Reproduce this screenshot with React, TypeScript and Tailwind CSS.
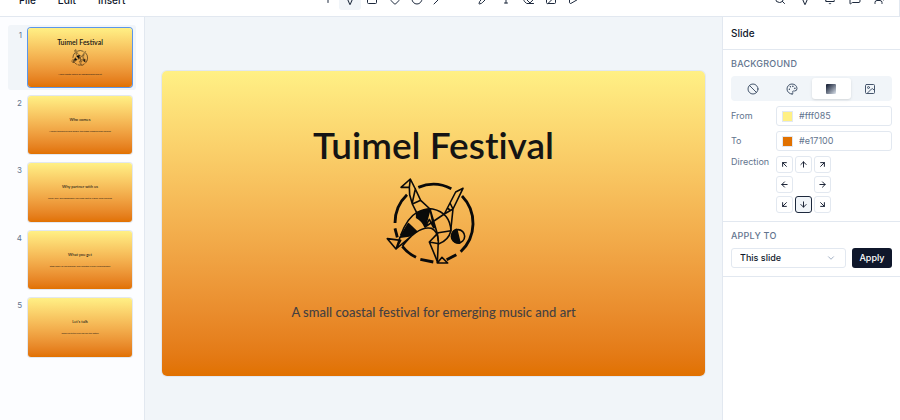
import React, { useState } from 'react';
import {
    ArrowDown, ArrowDownLeft, ArrowDownRight, ArrowLeft, ArrowRight, ArrowUp, ArrowUpLeft, ArrowUpRight,
    Ban, Bell, ChevronDown, Circle, Diamond, Eraser, Image, MessageSquare, Minus, MousePointer2, Palette,
    Pencil, Play, Plus, Search, Slash, Square, Type, UserPlus,
} from 'lucide-react';

const slides = [
    { title: 'Tuimel Festival', text: 'A small coastal festival for emerging music and art', cover: true },
    { title: 'Who comes', text: 'A couple thousand curious people, two stages, camping under big skies' },
    { title: 'Why partner with us', text: 'Warm, local, and independent: your name next to a much-loved weekend' },
    { title: 'What you get', text: 'Stage credit, on-site presence, and a mention in every announcement' },
    { title: "Let's talk", text: 'Reach out to the crew and join this edition' },
];

const tools = [
    { name: 'Add', icon: Plus },
    { name: 'Select', icon: MousePointer2, turned: true },
    { name: 'Rectangle', icon: Square },
    { name: 'Diamond', icon: Diamond },
    { name: 'Ellipse', icon: Circle },
    { name: 'Line', icon: Slash },
    { name: 'Divider', icon: Minus, faint: true },
    { name: 'Draw', icon: Pencil },
    { name: 'Text', icon: Type },
    { name: 'Eraser', icon: Eraser },
    { name: 'Image', icon: Image },
    { name: 'Present', icon: Play },
];

const actions = [
    { name: 'Search', icon: Search },
    { name: 'Pointer', icon: MousePointer2, turned: true },
    { name: 'Notifications', icon: Bell },
    { name: 'Comments', icon: MessageSquare },
    { name: 'Invite', icon: UserPlus },
];

const directions = [
    { name: 'Up left', icon: ArrowUpLeft },
    { name: 'Up', icon: ArrowUp },
    { name: 'Up right', icon: ArrowUpRight },
    { name: 'Left', icon: ArrowLeft },
    null,
    { name: 'Right', icon: ArrowRight },
    { name: 'Down left', icon: ArrowDownLeft },
    { name: 'Down', icon: ArrowDown },
    { name: 'Down right', icon: ArrowDownRight },
];

const Logo: React.FC<{ className?: string }> = ({ className }) => (
    <svg viewBox="45 20 294 270" className={className} fill="none" stroke="#0a0a0a" strokeWidth="4.8" strokeLinejoin="round">
        <g strokeWidth="8.5">
            <path d="M75 161A117 117 0 0 1 111 76" />
            <path d="M145 54A117 117 0 0 1 244 58" />
            <path d="M276 80A117 117 0 0 1 272 247" />
            <path d="M259 256L230 271" />
            <path d="M190 278L151 270" />
            <path d="M138 264A117 117 0 0 1 97 231" />
            <path d="M82 204L75 177" />
        </g>
        <path d="M93 54L121 29L118 54ZM121 29L136 59L126 104M118 54L119 76L127 104L152 93M136 59L152 93L180 119M127 104L140 130" />
        <path d="M140 130Q165 117 188 119Q240 130 243 185M140 130Q112 145 92 198" />
        <path d="M140 130L180 119L165 173Q158 155 140 145Z" fill="#0a0a0a" />
        <path d="M115 163L140 187L117 200L90 204Z" fill="#0a0a0a" />
        <path d="M52 208L92 213L78 239ZM78 239L140 187M90 204L78 239M97 231Q145 168 184 177Q203 185 205 215L202 281" />
        <path d="M180 119L192 177M180 119L202 193L205 215M165 173L223 134M165 173L178 150L192 177" />
        <path d="M279 57L257 68L223 134L249 119ZM240 101L249 119L242 185M232 116L240 122" />
        <path d="M243 184L205 190L178 218L207 223Q235 213 243 184M178 218L202 276M202 281L216 264L233 281Z" />
        <circle cx="264" cy="201" r="20" />
        <path d="M259 182L268 220A20 20 0 0 1 259 182Z" fill="#0a0a0a" strokeWidth="8" />
    </svg>
);

const Thumb: React.FC<{ slide: (typeof slides)[number]; active: boolean }> = ({ slide, active }) => (
    <div
        className={`flex aspect-video min-w-0 flex-1 flex-col items-center overflow-hidden rounded-[3px] bg-linear-to-b from-[#fff085] to-[#e17100] font-['Excalifont','Lato',sans-serif] text-[#141414] ring-1 ${
            active ? 'ring-[#5b96ea]' : 'ring-slate-200'
        }`}
    >
        {slide.cover ? (
            <>
                <span className="mt-[10px] text-[7px] leading-[9px] font-semibold">{slide.title}</span>
                <Logo className="mt-[2px] h-[17px]" />
                <span className="mt-[6px] text-[2px] leading-[4px]">{slide.text}</span>
            </>
        ) : (
            <>
                <span className="mt-[21px] text-[4px] leading-[6px] font-medium">{slide.title}</span>
                <span className="mt-[6px] text-[2px] leading-[4px] whitespace-nowrap">{slide.text}</span>
            </>
        )}
    </div>
);

const ColorRow: React.FC<{ id: string; label: string; value: string; swatch: string }> = ({ id, label, value, swatch }) => (
    <div className="flex items-center">
        <label htmlFor={id} className="w-[45px] shrink-0 text-[9px] text-slate-500">{label}</label>
        <div className="flex h-5 min-w-0 flex-1 items-center gap-1.5 rounded-[3px] border border-slate-200 px-[5px]">
            <span className={`size-[11px] shrink-0 border border-slate-200 ${swatch}`}></span>
            <input id={id} defaultValue={value} className="w-full min-w-0 text-[9px] text-slate-500 outline-none" />
        </div>
    </div>
);

const App: React.FC = () => {
    const [current, setCurrent] = useState(0);
    const [direction, setDirection] = useState('Down');

    return (
        <div className="flex h-screen flex-col overflow-hidden bg-white font-['Inter',sans-serif] text-slate-900">
            <header className="flex h-[17px] shrink-0 items-end overflow-hidden border-r border-b border-slate-200">
                <nav className="flex flex-1 gap-[22px] pb-2 pl-[19px] text-[10px] leading-4 font-medium">
                    <button>File</button>
                    <button>Edit</button>
                    <button>Insert</button>
                </nav>
                <div className="grid w-[268px] shrink-0 grid-cols-12 pb-1.5">
                    {tools.map((t) => (
                        <button
                            key={t.name}
                            aria-label={t.name}
                            className={`flex h-[22px] items-center justify-center rounded-[3px] ${
                                t.name === 'Select' ? 'bg-slate-100' : ''
                            } ${t.faint ? 'text-slate-200' : 'text-slate-800'}`}
                        >
                            <t.icon size={12} strokeWidth={2} className={t.turned ? 'rotate-225' : ''} />
                        </button>
                    ))}
                </div>
                <div className="flex flex-1 justify-end gap-[13px] pr-[13px] pb-1.5 pl-1">
                    {actions.map((a) => (
                        <button key={a.name} aria-label={a.name} className="flex h-[22px] items-center text-slate-800">
                            <a.icon size={12} strokeWidth={2} className={a.turned ? 'rotate-225' : ''} />
                        </button>
                    ))}
                </div>
            </header>

            <div className="flex min-h-0 flex-1">
                <aside className="flex w-[145px] shrink-0 flex-col gap-[3px] border-r border-slate-200 bg-[#fcfdff] pt-2 pr-2 pl-2">
                    {slides.map((slide, i) => (
                        <button
                            key={slide.title}
                            onClick={() => setCurrent(i)}
                            className={`flex items-start gap-1.5 rounded-[3px] py-[3px] pr-1 ${i === current ? 'bg-slate-100' : ''}`}
                        >
                            <span className="w-[14px] pt-[2px] text-right text-[8px] leading-[10px] text-slate-500">{i + 1}</span>
                            <Thumb slide={slide} active={i === current} />
                        </button>
                    ))}
                </aside>

                <main className="min-w-0 flex-1 bg-slate-100 px-[17px] pt-[54px]">
                    <div className="flex aspect-video flex-col items-center rounded-[5px] bg-linear-to-b from-[#fff085] to-[#e17100] font-['Excalifont','Lato',sans-serif] ring-1 ring-slate-200 [font-variant-ligatures:none]">
                        <h1 className="mt-[50px] text-[37px] leading-[48px] font-semibold text-[#141414]">{slides[current].title}</h1>
                        <Logo className="mt-[7px] h-[90px]" />
                        <p className="mt-9 text-[13px] leading-5 font-medium text-[#454040]">{slides[current].text}</p>
                    </div>
                </main>

                <aside className="w-[178px] shrink-0 border-l border-slate-200 bg-white">
                    <h2 className="border-b border-slate-200 px-2 py-2 text-[10px] leading-4 font-medium">Slide</h2>
                    <section className="border-b border-slate-200 p-2">
                        <h3 className="text-[9px] leading-3 font-medium tracking-wide text-slate-500">BACKGROUND</h3>
                        <div className="mt-1.5 grid grid-cols-4 rounded-[4px] bg-slate-100 p-0.5 text-slate-600">
                            <button aria-label="None" className="flex h-[21px] items-center justify-center"><Ban size={12} /></button>
                            <button aria-label="Solid" className="flex h-[21px] items-center justify-center"><Palette size={12} /></button>
                            <button aria-label="Gradient" className="flex h-[21px] items-center justify-center rounded-[3px] bg-white shadow-sm">
                                <span className="size-[10px] rounded-[1px] bg-linear-to-br from-slate-900 to-slate-200"></span>
                            </button>
                            <button aria-label="Image" className="flex h-[21px] items-center justify-center"><Image size={12} /></button>
                        </div>
                        <div className="mt-[5px] flex flex-col gap-[5px]">
                            <ColorRow id="from" label="From" value="#fff085" swatch="bg-[#fff085]" />
                            <ColorRow id="to" label="To" value="#e17100" swatch="bg-[#e17100]" />
                            <div className="flex items-start">
                                <span className="w-[45px] shrink-0 text-[9px] leading-3 text-slate-500">Direction</span>
                                <div className="grid grid-cols-3 gap-x-[2px] gap-y-[3px]">
                                    {directions.map((d) =>
                                        d ? (
                                            <button
                                                key={d.name}
                                                aria-label={d.name}
                                                aria-pressed={direction === d.name}
                                                onClick={() => setDirection(d.name)}
                                                className={`flex size-[17px] items-center justify-center rounded-[3px] border ${
                                                    direction === d.name ? 'border-slate-800 bg-slate-100' : 'border-slate-200'
                                                }`}
                                            >
                                                <d.icon size={9} strokeWidth={2.5} />
                                            </button>
                                        ) : (
                                            <span key="middle"></span>
                                        )
                                    )}
                                </div>
                            </div>
                        </div>
                    </section>
                    <section className="border-b border-slate-200 p-2">
                        <h3 className="text-[9px] leading-3 font-medium tracking-wide text-slate-500">
                            <label htmlFor="apply-to" className="block">APPLY TO</label>
                        </h3>
                        <div className="mt-1.5 flex gap-1.5">
                            <div className="relative flex flex-1">
                                <select id="apply-to" className="h-5 w-full appearance-none rounded-[3px] border border-slate-200 px-2 text-[9px] font-medium">
                                    <option>This slide</option>
                                    <option>All slides</option>
                                </select>
                                <ChevronDown size={10} className="pointer-events-none absolute top-[5px] right-2.5 text-slate-400" />
                            </div>
                            <button className="h-5 w-10 rounded-[3px] bg-slate-900 text-[9px] font-medium text-white">Apply</button>
                        </div>
                    </section>
                </aside>
            </div>
        </div>
    );
};

export default App;
